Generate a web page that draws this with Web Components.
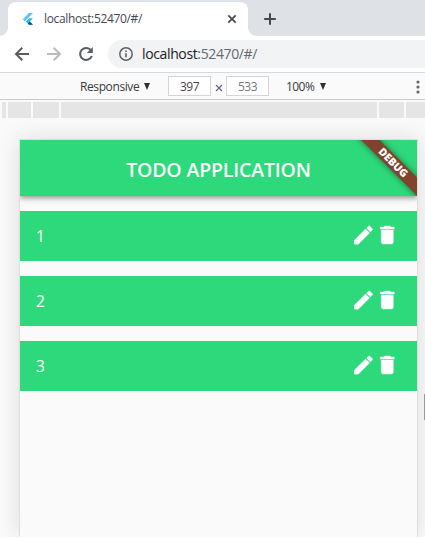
<!DOCTYPE html>
<html lang="en">
<head>
<meta charset="utf-8">
<title>Todo application</title>
<style>
html,body{margin:0;background:#fff}
body{width:425px;height:538px;overflow:hidden;font-family:"Open Sans","Noto Sans",sans-serif}
</style>
</head>
<body>
<browser-window></browser-window>
<script>
function define(name, html) {
  const template = document.createElement('template');
  template.innerHTML = html;
  customElements.define(name, class extends HTMLElement {
    constructor() {
      super();
      this.attachShadow({mode: 'open'}).append(template.content.cloneNode(true));
    }
  });
}

define('tab-strip', `<style>
:host{display:flex;height:36px;background:#dee1e6;padding-left:8px;align-items:flex-end;box-sizing:border-box}
.tab{position:relative;display:flex;align-items:center;width:240px;height:34px;background:#fff;border-radius:8px 8px 0 0;box-sizing:border-box;padding:0 10px 0 12px}
.tab::before,.tab::after{content:"";position:absolute;bottom:0;width:8px;height:8px}
.tab::before{left:-8px;background:radial-gradient(circle at 0 0,transparent 7.5px,#fff 8px)}
.tab::after{right:-8px;background:radial-gradient(circle at 100% 0,transparent 7.5px,#fff 8px)}
.title{margin-left:8px;flex:1;font-size:12px;line-height:16px;color:#45494d;white-space:nowrap;letter-spacing:-.35px}
svg{display:block;flex:none}
.new{margin:0 0 10px 14px}
</style>
<div class="tab">
<svg width="16" height="16" viewBox="0 0 16 16"><path d="M9 2h4L4.8 10.2l-2-2z" fill="#54c5f8"/><path d="M9 7.3h4L9.8 10.5 13 13.7H9L5.8 10.5z" fill="#39b5f0"/><path d="M7.8 12.5l2-2L13 13.7H9z" fill="#01579b"/></svg>
<span class="title">localhost:52470/#/</span>
<svg width="12" height="12" viewBox="0 0 12 12"><path d="M2.3 2.3l7.4 7.4M9.7 2.3L2.3 9.7" stroke="#45494d" stroke-width="1.7"/></svg>
</div>
<svg class="new" width="16" height="14" viewBox="0 0 16 14"><path d="M8 1.2v11.6M2.2 7h11.6" stroke="#45494d" stroke-width="2"/></svg>`);

define('address-bar', `<style>
:host{display:flex;height:36px;background:#fff;box-sizing:border-box;padding:4px 0 4px 14px;align-items:center}
svg{display:block;flex:none}
.fwd,.reload{margin-left:16px}
.box{display:flex;align-items:center;flex:1;height:28px;margin-left:14px;padding-left:10px;background:#f1f3f4;border-radius:14px 0 0 14px}
.url{margin-left:8px;font-size:14px;line-height:20px;color:#65696e;letter-spacing:-.37px;white-space:nowrap}
b{font-weight:400;color:#202124}
</style>
<svg width="16" height="16" viewBox="0 0 16 16"><path d="M15 8H2.5M8.3 1.8L2 8l6.3 6.2" fill="none" stroke="#5a5e63" stroke-width="2"/></svg>
<svg class="fwd" width="16" height="16" viewBox="0 0 16 16"><path d="M1 8h12.5M7.7 1.8L14 8l-6.3 6.2" fill="none" stroke="#babcbe" stroke-width="2"/></svg>
<svg class="reload" width="16" height="16" viewBox="0 0 16 16"><path d="M13 4.400A6 6 0 1 0 13.800 10" fill="none" stroke="#5a5e63" stroke-width="2.1"/><path d="M14.800 1v6H8.800z" fill="#5a5e63"/></svg>
<div class="box">
<svg width="16" height="16" viewBox="0 0 16 16"><circle cx="8" cy="8" r="6.2" fill="none" stroke="#5f6368" stroke-width="1.5"/><path d="M8 7.2v4M8 4.6v1.5" stroke="#5f6368" stroke-width="1.6"/></svg>
<span class="url"><b>localhost</b>:52470/#/</span>
</div>`);

define('device-toolbar', `<style>
:host{display:flex;height:28px;box-sizing:border-box;border-top:1px solid #d9d9d9;border-bottom:1px solid #c9cccb;background:#fafafa;align-items:center;padding-left:80px;font-size:12px;line-height:16px;color:#3a3a3a;position:relative}
i{width:0;height:0;border:3.5px solid transparent;border-top:7px solid #303030;border-bottom:0;flex:none}
.mode{width:59px;letter-spacing:-.4px;white-space:nowrap;margin-right:5px;padding-top:1px}
.size{width:43px;height:20px;box-sizing:border-box;border:1px solid #d5d5d5;background:#fff;text-align:center;line-height:19px;letter-spacing:-.5px}
.first{margin-left:18px;color:#484848}.second{color:#777}
.times{width:15px;display:flex;justify-content:center;padding-top:4px}
.zoom{margin-left:17px;width:29px;letter-spacing:-.55px;margin-right:5px;padding-top:1px}
.more{position:absolute;right:5px;top:7px}
svg{display:block}
</style>
<span class="mode">Responsive</span><i></i><span class="size first">397</span>
<span class="times"><svg width="8" height="8" viewBox="0 0 8 8"><path d="M1 1l6 6M7 1L1 7" stroke="#66677f" stroke-width="1.2"/></svg></span>
<span class="size second">533</span><span class="zoom">100%</span><i></i>
<svg class="more" width="4" height="14" viewBox="0 0 4 14"><g fill="#686868"><circle cx="2" cy="2" r="1.6"/><circle cx="2" cy="7" r="1.6"/><circle cx="2" cy="12" r="1.6"/></g></svg>`);

define('media-ruler', `<style>
:host{display:grid;grid-template-columns:4px 23px 26px 316px 25px 1fr;column-gap:2px;height:16px;padding:2px 0 0 2px}
span{background:#e5e5e5}
</style><span></span><span></span><span></span><span></span><span></span><span></span>`);

define('debug-ribbon', `<style>
:host{position:absolute;right:0;top:0;width:70px;height:56px;overflow:hidden}
span{position:absolute;left:-2.5px;top:16.500px;width:98px;height:12.5px;background:#80432d;box-shadow:0 0 6px rgba(0,0,0,.5);transform:rotate(45deg);text-align:center;color:#fff;font-weight:800;font-size:10.6px;line-height:12.5px;letter-spacing:-.05px;text-indent:-2px}
</style><span>DEBUG</span>`);

define('app-header', `<style>
:host{position:relative;display:flex;height:56px;align-items:center;justify-content:center;background:#2ed97b;box-shadow:0 2px 4px rgba(0,0,0,.24),0 3px 6px rgba(0,0,0,.16);clip-path:inset(0 0 -12px 0)}
h1{margin:4px 0 0;font-size:19.5px;line-height:28px;font-weight:600;color:#f8fffb;white-space:nowrap;letter-spacing:-.17px}
</style><h1><slot></slot></h1><debug-ribbon></debug-ribbon>`);

define('todo-item', `<style>
:host{display:flex;height:50px;box-sizing:border-box;background:#2ed97b;align-items:center;padding:0 18px 2px 16px;color:#fff;font-size:15.500px;line-height:22px}
.name{flex:1;padding-top:2px}
svg{display:block}
path{fill:#fff;stroke:#fff;stroke-width:.6}
</style><span class="name"><slot></slot></span>
<svg width="24" height="24" viewBox="-.5 0 24 24"><path style="stroke-width:.9" d="M3 17.25V21h3.75L17.81 9.94l-3.75-3.75L3 17.25z"/><path d="M20.71 7.04c.39-.39.39-1.02 0-1.41l-2.34-2.34c-.39-.39-1.02-.39-1.41 0l-1.83 1.83 3.75 3.75 1.83-1.83z"/></svg>
<svg width="24" height="24" viewBox="-.3 0 24 24"><path style="stroke-width:.4" d="M6 19c0 1.100.9 2 2 2h8c1.100 0 2-.9 2-2V7H6v12zM19 4h-3.500l-1-1h-5l-1 1H5v2h14V4z"/></svg>`);

define('device-screen', `<style>
:host{display:block;width:397px;height:397px;box-sizing:content-box;border:1px solid #dedede;border-bottom:0;background:#fafafa;box-shadow:0 0 22px rgba(0,0,0,.12)}
.list{display:grid;gap:15px;padding-top:15px}
</style>
<app-header>TODO APPLICATION</app-header>
<div class="list"><todo-item>1</todo-item><todo-item>2</todo-item><todo-item>3</todo-item></div>`);

define('browser-window', `<style>
:host{display:flex;flex-direction:column;width:425px;height:537px;overflow:hidden;background:#fafafa;position:relative}
.stage{padding:21px 0 0 19px;flex:1;overflow:hidden}
.handle{position:absolute;left:424px;top:394px;width:1px;height:26px;background:#999}
</style>
<tab-strip></tab-strip><address-bar></address-bar><device-toolbar></device-toolbar><media-ruler></media-ruler>
<div class="stage"><device-screen></device-screen></div><div class="handle"></div>`);
</script>
</body>
</html>
